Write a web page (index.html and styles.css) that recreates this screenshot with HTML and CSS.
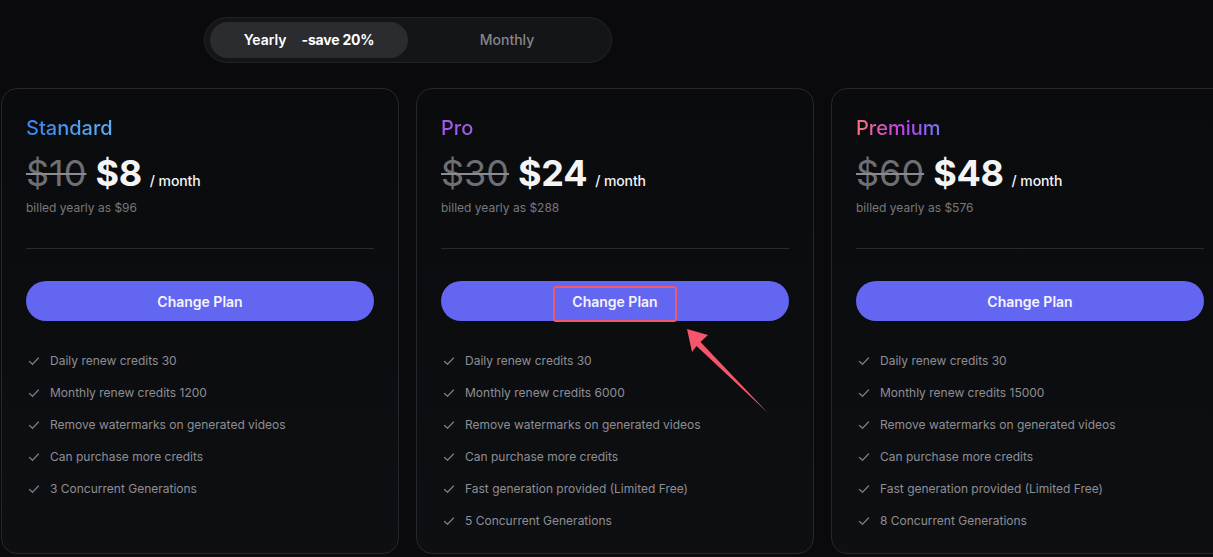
FILE: index.html
```html
<!DOCTYPE html>
<html lang="en">
<head>
<meta charset="utf-8">
<title>Pricing</title>
<link rel="stylesheet" href="styles.css">
</head>
<body>
<div class="page">
  <div class="toggle">
    <div class="opt active"><span class="yr">Yearly</span><span class="save">-save 20%</span></div>
    <div class="opt">Monthly</div>
  </div>

  <div class="cards">
    <div class="card">
      <div class="title t-standard">Standard</div>
      <div class="price"><span class="old">$10</span><span class="new">$8</span><span class="per">/ month</span></div>
      <div class="billed">billed yearly as $96</div>
      <div class="divider"></div>
      <button class="btn">Change Plan</button>
      <ul class="features">
        <li><svg class="chk" viewBox="0 0 12 12"><path d="M1.5 6.5 L4.5 9.2 L10.5 3"/></svg>Daily renew credits 30</li>
        <li><svg class="chk" viewBox="0 0 12 12"><path d="M1.5 6.5 L4.5 9.2 L10.5 3"/></svg>Monthly renew credits 1200</li>
        <li><svg class="chk" viewBox="0 0 12 12"><path d="M1.5 6.5 L4.5 9.2 L10.5 3"/></svg>Remove watermarks on generated videos</li>
        <li><svg class="chk" viewBox="0 0 12 12"><path d="M1.5 6.5 L4.5 9.2 L10.5 3"/></svg>Can purchase more credits</li>
        <li><svg class="chk" viewBox="0 0 12 12"><path d="M1.5 6.5 L4.5 9.2 L10.5 3"/></svg>3 Concurrent Generations</li>
      </ul>
    </div>

    <div class="card">
      <div class="title t-pro">Pro</div>
      <div class="price"><span class="old">$30</span><span class="new">$24</span><span class="per">/ month</span></div>
      <div class="billed">billed yearly as $288</div>
      <div class="divider"></div>
      <button class="btn">Change Plan<span class="highlight"></span></button>
      <ul class="features">
        <li><svg class="chk" viewBox="0 0 12 12"><path d="M1.5 6.5 L4.5 9.2 L10.5 3"/></svg>Daily renew credits 30</li>
        <li><svg class="chk" viewBox="0 0 12 12"><path d="M1.5 6.5 L4.5 9.2 L10.5 3"/></svg>Monthly renew credits 6000</li>
        <li><svg class="chk" viewBox="0 0 12 12"><path d="M1.5 6.5 L4.5 9.2 L10.5 3"/></svg>Remove watermarks on generated videos</li>
        <li><svg class="chk" viewBox="0 0 12 12"><path d="M1.5 6.5 L4.5 9.2 L10.5 3"/></svg>Can purchase more credits</li>
        <li><svg class="chk" viewBox="0 0 12 12"><path d="M1.5 6.5 L4.5 9.2 L10.5 3"/></svg>Fast generation provided (Limited Free)</li>
        <li><svg class="chk" viewBox="0 0 12 12"><path d="M1.5 6.5 L4.5 9.2 L10.5 3"/></svg>5 Concurrent Generations</li>
      </ul>
      <svg class="arrow" viewBox="0 0 100 100" width="100" height="100">
        <polygon points="10,10 31,16 23.5,23 91,94 19.5,27 15,33" />
      </svg>
    </div>

    <div class="card">
      <div class="title t-premium">Premium</div>
      <div class="price"><span class="old">$60</span><span class="new">$48</span><span class="per">/ month</span></div>
      <div class="billed">billed yearly as $576</div>
      <div class="divider"></div>
      <button class="btn">Change Plan</button>
      <ul class="features">
        <li><svg class="chk" viewBox="0 0 12 12"><path d="M1.5 6.5 L4.5 9.2 L10.5 3"/></svg>Daily renew credits 30</li>
        <li><svg class="chk" viewBox="0 0 12 12"><path d="M1.5 6.5 L4.5 9.2 L10.5 3"/></svg>Monthly renew credits 15000</li>
        <li><svg class="chk" viewBox="0 0 12 12"><path d="M1.5 6.5 L4.5 9.2 L10.5 3"/></svg>Remove watermarks on generated videos</li>
        <li><svg class="chk" viewBox="0 0 12 12"><path d="M1.5 6.5 L4.5 9.2 L10.5 3"/></svg>Can purchase more credits</li>
        <li><svg class="chk" viewBox="0 0 12 12"><path d="M1.5 6.5 L4.5 9.2 L10.5 3"/></svg>Fast generation provided (Limited Free)</li>
        <li><svg class="chk" viewBox="0 0 12 12"><path d="M1.5 6.5 L4.5 9.2 L10.5 3"/></svg>8 Concurrent Generations</li>
      </ul>
    </div>
  </div>
</div>
</body>
</html>
```

FILE: styles.css
```css
* { box-sizing: border-box; }
html, body {
  margin: 0;
  padding: 0;
  background: #0a0a0c;
  overflow: hidden;
  width: 1213px;
  height: 557px;
}
body {
  font-family: Inter, "Noto Sans", sans-serif;
  color: #fff;
}
.page {
  padding-top: 17px;
}
.toggle {
  margin-left: 204px;
  width: 408px;
  height: 46px;
  border-radius: 23px;
  background: #141518;
  border: 1px solid #232428;
  padding: 4px 5px;
  display: flex;
}
.opt {
  flex: 1;
  display: flex;
  align-items: center;
  justify-content: center;
  border-radius: 18px;
  font-size: 14px;
  line-height: 16px;
  padding-bottom: 1px;
  color: #85868a;
  font-weight: 500;
}
.opt.active {
  background: #2b2c2f;
  color: #fff;
  font-weight: 600;
}
.opt .yr { margin-right: 15px; }
.opt .save { font-weight: 700; letter-spacing: -0.2px; }

.cards {
  display: flex;
  gap: 17px;
  margin-top: 25px;
  margin-left: 1px;
}
.card {
  position: relative;
  flex: 0 0 398px;
  height: 466px;
  border: 1px solid #26272c;
  border-radius: 16px;
  background: linear-gradient(180deg, #0a0b0d 0%, #0e0f12 100%);
  padding: 24px 24px 0 24px;
}
.title {
  font-size: 20px;
  line-height: 30px;
  font-weight: 500;
  width: max-content;
  -webkit-background-clip: text;
  background-clip: text;
  color: transparent;
}
.t-standard { background-image: linear-gradient(90deg, #3b82f6, #5eb0f5); }
.t-pro { background-image: linear-gradient(90deg, #a855f7, #9b5fe0); }
.t-premium { background-image: linear-gradient(90deg, #f47474, #c23ff0 55%, #6a7cf5); }

.price {
  margin-top: 8px;
  height: 44px;
  display: flex;
  align-items: baseline;
}
.old {
  font-size: 36px;
  line-height: 44px;
  color: #6e6f73;
  text-decoration: line-through;
  text-decoration-thickness: 2px;
  text-decoration-color: #8b8c90;
  margin-right: 9px;
}
.new {
  font-size: 36px;
  line-height: 44px;
  font-weight: 700;
  color: #f4f4f5;
  margin-right: 8px;
  letter-spacing: -0.3px;
}
.per {
  font-size: 14px;
  font-weight: 500;
  color: #f4f4f5;
  letter-spacing: -0.1px;
}
.billed {
  margin-top: 5px;
  font-size: 12px;
  line-height: 16px;
  color: #77787d;
}
.divider {
  margin-top: 32px;
  height: 1px;
  background: #2a2b30;
}
.btn {
  position: relative;
  display: block;
  width: 100%;
  margin-top: 32px;
  height: 40px;
  border: none;
  border-radius: 20px;
  background: #6366f1;
  color: #f4f4ff;
  font-family: Inter, "Noto Sans", sans-serif;
  font-size: 14px;
  font-weight: 600;
}
.highlight {
  position: absolute;
  left: 112px;
  top: 5px;
  width: 124px;
  height: 36px;
  border: 2px solid #f0596b;
  border-radius: 3px;
}
.features {
  list-style: none;
  margin: 30px 0 0 0;
  padding: 0;
  display: flex;
  flex-direction: column;
  gap: 12px;
}
.features li {
  display: flex;
  align-items: center;
  font-size: 12px;
  line-height: 20px;
  color: #8e8f94;
}
.chk {
  width: 12px;
  height: 12px;
  margin-left: 2px;
  margin-right: 10px;
  fill: none;
  stroke: #7a7b80;
  stroke-width: 1.3;
  stroke-linecap: round;
  stroke-linejoin: round;
}
.arrow {
  position: absolute;
  left: 260px;
  top: 230px;
  fill: #f5566b;
}
```
